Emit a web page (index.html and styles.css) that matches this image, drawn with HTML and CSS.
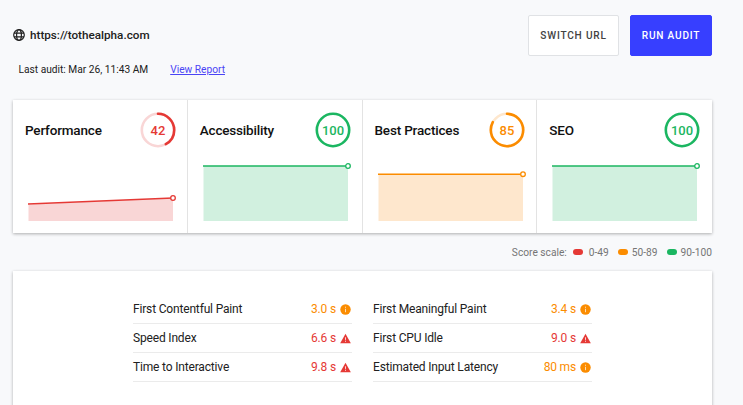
FILE: index.html
```html
<!DOCTYPE html>
<html lang="en">
<head>
    <meta charset="UTF-8">
    <title>Lighthouse Audit</title>
    <link rel="stylesheet" href="styles.css">
</head>
<body>

<!-- ===== HEADER ===== -->
<header class="header">
    <div class="site">
        <div class="site_url">
            <svg class="globe" width="12" height="12" viewBox="0 0 12 12">
                <circle cx="6" cy="6" r="5.3" />
                <ellipse cx="6" cy="6" rx="2.4" ry="5.3" />
                <path d="M1 4.1h10M1 7.9h10" />
            </svg>
            <span>https://tothealpha.com</span>
        </div>
        <div class="audit_info">
            <span class="audit_date">Last audit: Mar 26, 11:43 AM</span>
            <a class="report_link" href="#">View Report</a>
        </div>
    </div>
    <div class="actions">
        <button class="button">Switch URL</button>
        <button class="button primary">Run Audit</button>
    </div>
</header>

<!-- ===== SCORE CARDS ===== -->
<div class="scores">
    <div class="score_card fail">
        <div class="score_head">
            <h3>Performance</h3>
            <svg class="gauge" width="36" height="36">
                <circle class="gauge_bg" cx="18" cy="18" r="16.2" />
                <circle class="gauge_fill" cx="18" cy="18" r="16.2" pathLength="100" stroke-dasharray="42 100" />
                <text x="18" y="22.5">42</text>
            </svg>
        </div>
        <svg class="chart" width="151" height="62">
            <path class="area" d="M3.5 44.5L148 38V61H3.5z" />
            <path class="line" d="M3 44L148 38" />
            <circle class="dot" cx="148" cy="38" r="2.3" />
        </svg>
    </div>
    <div class="score_card pass">
        <div class="score_head">
            <h3>Accessibility</h3>
            <svg class="gauge" width="36" height="36">
                <circle class="gauge_fill" cx="18" cy="18" r="16.2" />
                <text x="18" y="22.5">100</text>
            </svg>
        </div>
        <svg class="chart" width="151" height="62">
            <path class="area" d="M3.5 6H148V61H3.5z" />
            <path class="line" d="M3 6H148" />
            <circle class="dot" cx="148" cy="6" r="2.3" />
        </svg>
    </div>
    <div class="score_card average">
        <div class="score_head">
            <h3>Best Practices</h3>
            <svg class="gauge" width="36" height="36">
                <circle class="gauge_bg" cx="18" cy="18" r="16.2" />
                <circle class="gauge_fill" cx="18" cy="18" r="16.2" pathLength="100" stroke-dasharray="83 100" />
                <text x="18" y="22.5">85</text>
            </svg>
        </div>
        <svg class="chart" width="151" height="62">
            <path class="area" d="M3.5 14.2H148V61H3.5z" />
            <path class="line" d="M3 14.2H148" />
            <circle class="dot" cx="148" cy="14.2" r="2.3" />
        </svg>
    </div>
    <div class="score_card pass">
        <div class="score_head">
            <h3>SEO</h3>
            <svg class="gauge" width="36" height="36">
                <circle class="gauge_fill" cx="18" cy="18" r="16.2" />
                <text x="18" y="22.5">100</text>
            </svg>
        </div>
        <svg class="chart" width="151" height="62">
            <path class="area" d="M3.5 6H148V61H3.5z" />
            <path class="line" d="M3 6H148" />
            <circle class="dot" cx="148" cy="6" r="2.3" />
        </svg>
    </div>
</div>

<div class="scale">
    <span class="scale_label">Score scale:</span>
    <span class="scale_item fail">0-49</span>
    <span class="scale_item average">50-89</span>
    <span class="scale_item pass">90-100</span>
</div>

<!-- ===== METRICS ===== -->
<svg class="defs" width="0" height="0">
    <symbol id="icon-info" viewBox="0 0 11 11">
        <circle cx="5.5" cy="5.5" r="5.2" fill="currentColor" />
        <path d="M5.5 2.7v1.1M5.5 4.8v3.4" stroke="#ffdcb0" />
    </symbol>
    <symbol id="icon-warning" viewBox="0 0 11 11">
        <path d="M5.5 .8L10.8 10.3H.2z" fill="currentColor" />
        <path d="M5.5 4.3v2.6M5.5 7.7v1.1" stroke="#fbd5d5" />
    </symbol>
</svg>
<div class="metrics">
    <div class="metric_col">
        <div class="metric"><span>First Contentful Paint</span><span class="value average">3.0 s <svg><use href="#icon-info" /></svg></span></div>
        <div class="metric"><span>Speed Index</span><span class="value fail">6.6 s <svg><use href="#icon-warning" /></svg></span></div>
        <div class="metric"><span>Time to Interactive</span><span class="value fail">9.8 s <svg><use href="#icon-warning" /></svg></span></div>
    </div>
    <div class="metric_col">
        <div class="metric"><span>First Meaningful Paint</span><span class="value average">3.4 s <svg><use href="#icon-info" /></svg></span></div>
        <div class="metric"><span>First CPU Idle</span><span class="value fail">9.0 s <svg><use href="#icon-warning" /></svg></span></div>
        <div class="metric"><span>Estimated Input Latency</span><span class="value average">80 ms <svg><use href="#icon-info" /></svg></span></div>
    </div>
</div>

</body>
</html>
```
FILE: styles.css
```css
* {
    box-sizing: border-box;
}

body {
    margin: 0;
    padding: 15px 31px 0 13px;
    height: 405px;
    overflow: hidden;
    font-family: Roboto, sans-serif;
    background-color: #f8f9fb;
    color: #212121;
}

/* ===== Header ===== */
.header {
    display: flex;
    justify-content: space-between;
    height: 85px;
}

.site_url {
    display: flex;
    align-items: center;
    gap: 5px;
    height: 40px;
    font-size: 11.7px;
    font-weight: 500;
}

.globe {
    fill: none;
    stroke: #212121;
    stroke-width: 1.2;
}

.audit_info {
    display: flex;
    gap: 22px;
    padding: 9px 0 0 5.5px;
    font-size: 10.2px;
    line-height: 12px;
}

.report_link {
    color: #4a44f5;
}

.actions {
    display: flex;
    align-items: flex-start;
    gap: 11px;
}

.button {
    width: 91px;
    height: 41px;
    padding: 0;
    border: 1px solid #e0e2e5;
    border-radius: 2px;
    background-color: #fff;
    color: #424242;
    font-family: inherit;
    font-size: 10.1px;
    font-weight: 500;
    letter-spacing: 0.8px;
    text-transform: uppercase;
}

.button.primary {
    width: 82px;
    border-color: #373fff;
    background-color: #373fff;
    color: #fff;
}

/* ===== Score colors ===== */
.fail {
    --color: #e53935;
    --tint: #f9d6d6;
}

.average {
    --color: #fb8c00;
    --tint: #fee7cd;
}

.pass {
    --color: #1bb661;
    --tint: #d1f0df;
}

/* ===== Score cards ===== */
.scores {
    display: grid;
    grid-template-columns: repeat(4, minmax(0, 1fr));
    height: 133px;
    background-color: #fff;
    box-shadow: 0 1px 3px rgba(0, 0, 0, 0.3);
}

.score_card {
    padding: 12px 11px 0 12px;
    border-right: 1px solid #e3e3e3;
}

.score_card:last-child {
    border-right: none;
    padding-right: 12px;
}

.score_head {
    display: flex;
    align-items: center;
    justify-content: space-between;
}

.score_head h3 {
    margin: 0;
    font-size: 13.5px;
    font-weight: 500;
    letter-spacing: -0.18px;
    line-height: 14px;
    color: #111;
}

.gauge circle {
    fill: none;
    stroke: var(--color);
    stroke-width: 2.6;
    transform: rotate(-90deg);
    transform-origin: 18px 18px;
}

.gauge .gauge_bg {
    stroke: var(--tint);
}

.gauge_fill {
    stroke-linecap: round;
}

.gauge text {
    fill: var(--color);
    font-size: 13px;
    font-weight: 500;
    text-anchor: middle;
}

.chart {
    display: block;
    margin-top: 12px;
}

.area {
    fill: var(--tint);
}

.line {
    fill: none;
    stroke: var(--color);
    stroke-width: 1.6;
}

.dot {
    fill: #fff;
    stroke: var(--color);
    stroke-width: 1.3;
}

/* ===== Score scale ===== */
.scale {
    display: flex;
    align-items: center;
    justify-content: flex-end;
    height: 38px;
    font-size: 10.2px;
    color: #757575;
}

.scale_item {
    display: flex;
    align-items: center;
    gap: 4px;
    margin-left: 9px;
}

.scale_item.fail {
    gap: 6px;
    margin-left: 6px;
}

.scale_item::before {
    content: "";
    width: 10px;
    height: 6px;
    border-radius: 3px;
    background-color: var(--color);
}

/* ===== Metrics ===== */
.defs {
    position: absolute;
}

.metrics {
    display: flex;
    gap: 21px;
    height: 150px;
    padding: 24px 120px 0;
    background-color: #fff;
    box-shadow: 0 1px 3px rgba(0, 0, 0, 0.3);
}

.metric_col {
    flex: 1;
}

.metric {
    display: flex;
    align-items: center;
    justify-content: space-between;
    height: 29px;
    border-bottom: 1px solid #ebebeb;
    font-size: 12px;
    letter-spacing: -0.17px;
}

.value {
    display: flex;
    align-items: center;
    gap: 4px;
    padding-right: 1px;
    color: var(--color);
}

.value svg {
    width: 11px;
    height: 11px;
}
```
